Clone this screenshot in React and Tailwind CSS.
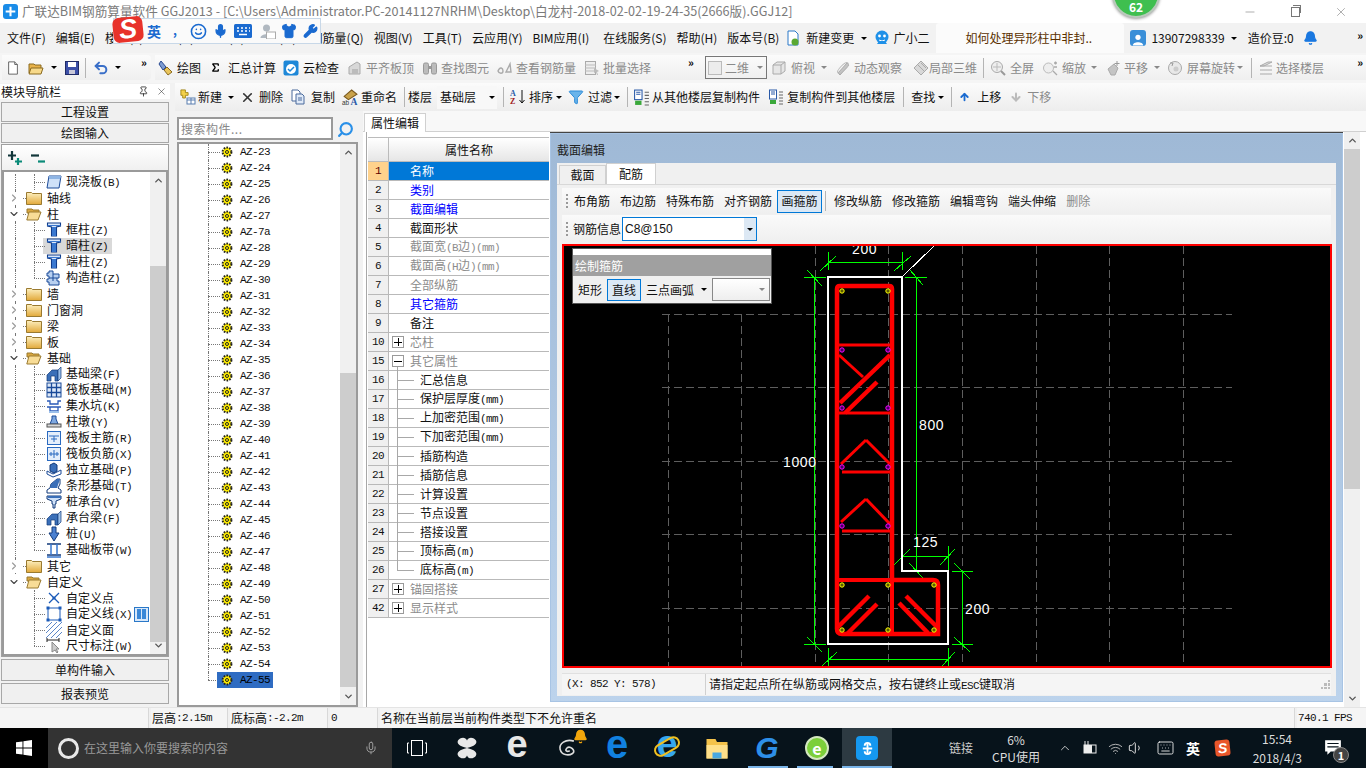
import React from 'react';
import { ChevronRight, ChevronDown, ChevronUp, Search, Pin, X, Minus, Smile, Mic, Shirt, Wrench, Wifi, Volume1, Keyboard, Bell, ArrowUp, ArrowDown, Sigma, Filter, Undo2 } from 'lucide-react';

const Sim = ({ children }) => {
  const parts = String(children).split(/([\x00-\x7F]+)/).filter(Boolean);
  return <>{parts.map((p, i) => /^[\x00-\x7F]+$/.test(p)
    ? <span key={i} className="font-['Liberation_Mono',monospace] text-[11px] tracking-[-0.6px] whitespace-pre">{p}</span>
    : <span key={i}>{p}</span>)}</>;
};

const Tx = ({ c = '', g, children }) => <span className={`whitespace-nowrap leading-none ${g ? 'text-[#8a8a8a]' : 'text-[#111]'} ${c}`}>{children}</span>;
const Caret = ({ c = '', g }) => <span className={`w-0 h-0 shrink-0 border-x-[3px] border-t-[3px] border-x-transparent ${g ? 'border-t-[#888]' : 'border-t-black'} ${c}`} />;
const Sep = ({ c = '' }) => <span className={`w-px h-[20px] bg-[#b4b4b4] shrink-0 ${c}`} />;
const More = ({ c = '' }) => <span className={`text-[11px] font-bold leading-none text-black shrink-0 ${c}`}>»</span>;
const Sv = ({ c = 'w-4 h-4', children, vb = '0 0 16 16' }) => <svg viewBox={vb} className={`shrink-0 ${c}`}>{children}</svg>;

const IDoc = ({ c }) => <Sv c={c}><path d="M3 1h7l3 3v11H3z" fill="#fff" stroke="#555" /><path d="M10 1v3h3" fill="#ddd" stroke="#555" /></Sv>;
const IFolderTool = ({ c }) => <Sv c={c}><path d="M1 4h5l1 1h6v8H1z" fill="#e8b24a" stroke="#8a6a20" /><path d="M3 8h12l-2 6H1z" fill="#f7d98a" stroke="#8a6a20" /></Sv>;
const ISave = ({ c }) => <Sv c={c}><rect x="1.5" y="1.5" width="13" height="13" fill="#3c4fa8" stroke="#1f2a66" /><rect x="4" y="2" width="8" height="5" fill="#fff" /><rect x="5" y="10" width="6" height="4" fill="#c8c8d8" /></Sv>;
const IBrush = ({ c }) => <Sv c={c}><path d="M3 1l5 6-3 3-4-6z" fill="#7d9bd0" stroke="#2a4a90" /><path d="M6 10l3-3 5 5-4 3z" fill="#e9c45a" stroke="#8a6a20" /></Sv>;
const ICloud = ({ c }) => <Sv c={c}><rect x="0.5" y="0.5" width="15" height="15" rx="2" fill="#1e88d8" /><circle cx="8" cy="9" r="5" fill="#fff" /><path d="M5 9l2 2 4-4" stroke="#1e88d8" strokeWidth="1.5" fill="none" /></Sv>;
const IGrayA = ({ c }) => <Sv c={c}><path d="M2 14V7l8-5 3 2v10z" fill="#d8d8d8" stroke="#aaa" /><path d="M5 9h6v5H5z" fill="#bbb" /></Sv>;
const IBino = ({ c }) => <Sv c={c}><rect x="1.5" y="3" width="5" height="11" rx="1.5" fill="#bcbcbc" stroke="#999" /><rect x="9.5" y="3" width="5" height="11" rx="1.5" fill="#bcbcbc" stroke="#999" /><rect x="6" y="6" width="4" height="3" fill="#999" /></Sv>;
const IRing = ({ c }) => <Sv c={c}><path d="M1 11c2-5 5-3 5 0s-4 3-5 0z" fill="none" stroke="#aaa" strokeWidth="1.4" /><path d="M9 12l4-8 1 8z" fill="none" stroke="#aaa" strokeWidth="1.4" /></Sv>;
const IBatch = ({ c }) => <Sv c={c}><rect x="1.5" y="1.5" width="10" height="13" fill="#eee" stroke="#aaa" /><path d="M1 5h11M1 8h11M1 11h11" stroke="#bbb" /><path d="M10 8l5 3-2 1 1 3-1 0-1-3-2 1z" fill="#bbb" /></Sv>;
const ICube = ({ c }) => <Sv c={c}><path d="M2 5l4-3h8v9l-4 3H2z" fill="#e6e6e6" stroke="#aaa" /><path d="M2 5h8v9M10 5l4-3" fill="none" stroke="#aaa" /></Sv>;
const IOrbit = ({ c }) => <Sv c={c}><path d="M3 13L12 3l2 2-9 10z" fill="#c4c4c4" stroke="#aaa" /><ellipse cx="8" cy="8" rx="7" ry="2.5" fill="none" stroke="#bbb" transform="rotate(-45 8 8)" /></Sv>;
const ILocal = ({ c }) => <Sv c={c}><path d="M8 1l7 7-7 7-7-7z" fill="#d8d8d8" stroke="#aaa" /><path d="M5 5l6 6M8 3l5 5" stroke="#aaa" /></Sv>;
const IZoom = ({ c }) => <Sv c={c}><circle cx="7" cy="7" r="5.5" fill="#eee" stroke="#aaa" /><path d="M7 3v8M3 7h8" stroke="#bbb" /><path d="M11 11l4 4" stroke="#999" strokeWidth="2" /></Sv>;
const IZoom2 = ({ c }) => <Sv c={c}><circle cx="6.5" cy="8" r="5" fill="#eee" stroke="#bbb" /><path d="M11 11l4 4M12 3h3M13.5 1.5v3M12 7h3" stroke="#aaa" strokeWidth="1.3" /></Sv>;
const IPan = ({ c }) => <Sv c={c}><path d="M3 9l6-5 4 4-3 7H6z" fill="#c4c4c4" stroke="#aaa" /><path d="M12 1v5M9.5 3.5h5" stroke="#999" /></Sv>;
const IRot = ({ c }) => <Sv c={c}><circle cx="8" cy="8" r="6.5" fill="#e8e8e8" stroke="#aaa" /><circle cx="9" cy="9" r="2.5" fill="#ccc" /><path d="M3 3l3 0-1 3" fill="none" stroke="#999" /></Sv>;
const IFloors = ({ c }) => <Sv c={c}><path d="M2 6l8-4 4 0-8 4zM2 10h12M2 14h12M2 6h12" stroke="#aaa" fill="#ddd" /></Sv>;
const INew = ({ c }) => <Sv c={c}><path d="M1 1h5v3h3v3H6v3H3V7H1z" transform="scale(.9)" fill="#f3d14a" stroke="#a08416" /><rect x="7" y="9" width="8" height="6" fill="#fff" stroke="#5a7fb0" /><path d="M7 11h8M11 9v6" stroke="#5a7fb0" /></Sv>;
const ICopy = ({ c }) => <Sv c={c}><path d="M2 1h6l2 2v9H2z" fill="#fff" stroke="#4a6a9c" /><path d="M6 5h6l2 2v8H6z" fill="#dfe9f7" stroke="#4a6a9c" /><path d="M8 9h4M8 11h4" stroke="#4a6a9c" /></Sv>;
const IRename = ({ c }) => <Sv c={c}><path d="M3 7l7-6 5 4-8 5z" fill="#c9a24a" stroke="#7a5a20" /><text x="9" y="15.5" fontSize="9" fontWeight="700" fill="#2a5aa8" fontFamily="Liberation Serif">A</text><text x="1" y="15" fontSize="6" fill="#333" fontFamily="Liberation Sans">ab</text></Sv>;
const ISort = ({ c }) => <Sv c={c} vb="0 0 20 16"><text x="1" y="7" fontSize="8" fontWeight="700" fill="#2a5aa8" fontFamily="Liberation Serif">A</text><text x="1" y="15" fontSize="8" fontWeight="700" fill="#a02020" fontFamily="Liberation Serif">Z</text><path d="M13 1v13M10.5 11l2.5 3 2.5-3" stroke="#111" fill="none" /></Sv>;
const ICopyFloor = ({ c }) => <Sv c={c}><rect x="1.5" y="1" width="7" height="9" fill="#fff" stroke="#2a5aa8" /><path d="M3 3h4M3 5h4" stroke="#2a5aa8" /><rect x="2" y="11" width="6" height="4" fill="#3aa83a" /><path d="M11 3h4M11 6h4M11 9h4M11 12h4M11 15h4" stroke="#666" /></Sv>;

const IBeam = () => <Sv><path d="M1 15V9l5-5h6v11h-3v-5H5v5z" fill="#3a6fb8" stroke="#123a7a" strokeWidth=".7" /><path d="M12 4l3-3v11l-3 3z" fill="#9cc0ea" stroke="#123a7a" strokeWidth=".7" /></Sv>;
const IT = () => <Sv><path d="M1.5 1h13v3l-4 1v9h-5V5l-4-1z" fill="#dbe8fa" stroke="#113c8a" strokeWidth="1.1" /><path d="M6 5h4v9H6z" fill="#3a78d0" /><path d="M1.5 3.5h13" stroke="#3a78d0" /></Sv>;
const IBrick = () => <Sv><path d="M3 1h4v3h6v4h-2v3h2v4H3v-3H1V9h2V6H1V3h2z" fill="#b8d0f0" stroke="#1a4a98" /><path d="M7 4v7M3 8h8" stroke="#1a4a98" /></Sv>;
const ISlab = () => <Sv><path d="M3 2h12l-2 12H1z" fill="#cfe1f8" stroke="#1a4a98" /><path d="M3 2h12l-1 3H3z" fill="#8fb5e4" /></Sv>;
const IGrid = () => <Sv><rect x="1" y="1" width="14" height="14" fill="#dce8f8" stroke="#1a4a98" /><path d="M5.5 1v14M10.5 1v14M1 5.5h14M1 10.5h14" stroke="#1a4a98" strokeWidth="1.3" /></Sv>;
const IPit = () => <Sv><path d="M1 3h3v3h8V3h3M1 9h14M4 9v4h8V9" fill="none" stroke="#2a5ab8" strokeWidth="1.3" /><path d="M3 14h10" stroke="#9cc0ea" strokeWidth="2" /></Sv>;
const IPier = () => <Sv><path d="M6 2h4v3l2 5H4l2-5z" fill="#7ea8e0" stroke="#1a4a98" /><rect x="1" y="10" width="14" height="3" fill="#d8d8d8" stroke="#555" /></Sv>;
const IRebar = ({ m }) => <Sv><rect x="1.5" y="1.5" width="13" height="13" fill="#e4eefb" stroke="#2a6ac0" /><path d={m ? 'M3 8h10M8 4v8M5 6v4M11 6v4' : 'M3 6h10M8 6v6M5 9h6'} stroke="#2a6ac0" fill="none" /></Sv>;
const IInde = () => <Sv><path d="M1 9l6 3 8-4v4l-8 3-6-3z" fill="#fff" stroke="#1a4a98" /><path d="M4 3l4-2 3 2v6l-3 2-4-2z" fill="#3a6fb8" stroke="#123a7a" /></Sv>;
const IStrip = () => <Sv><path d="M1 15v-3l3-2 1-4 6-5h3v5l-2 4 3 2v3z" fill="#fff" stroke="#123a7a" /><path d="M5 6l6-5h3l-3 9H4z" fill="#3a6fb8" /></Sv>;
const ICap = () => <Sv><path d="M1 2h14v3l-5 2v3h-1v4H7v-4H6V7L1 5z" fill="#cfe1f8" stroke="#123a7a" /><path d="M2 2h13v2H2z" fill="#3a6fb8" /></Sv>;
const IPile = () => <Sv><path d="M6 1h4v6h3l-5 8-5-8h3z" fill="#4a80d0" stroke="#123a7a" /></Sv>;
const IBand = () => <Sv><path d="M1 2h14M1 13h14" stroke="#123a7a" strokeWidth="1.5" /><path d="M5 2v11M11 2v11M1 15h14" stroke="#3a78d0" strokeWidth="1.5" /></Sv>;
const IPoint = () => <Sv><path d="M3 3l10 10M13 3L3 13" stroke="#1a5ab8" strokeWidth="1.3" /><circle cx="8" cy="8" r="1.6" fill="#1a5ab8" /></Sv>;
const ILine = () => <Sv><rect x="2" y="2" width="12" height="12" fill="none" stroke="#1a5ab8" /><g fill="#1a5ab8"><rect x="0.5" y="0.5" width="3" height="3" /><rect x="12.5" y="0.5" width="3" height="3" /><rect x="0.5" y="12.5" width="3" height="3" /><rect x="12.5" y="12.5" width="3" height="3" /></g></Sv>;
const IArea = () => <Sv><path d="M0 6l6-6M0 11L11 0M0 16L16 0M5 16L16 5M10 16l6-6" stroke="#5a86c8" /></Sv>;
const IDim = () => <Sv><path d="M1 0v4M13 0v4M1 2h12" stroke="#222" /><path d="M6 4v10l3-2 2 3 1-1-2-3h3z" fill="#ccc" stroke="#888" /></Sv>;
const IFolder = ({ open }) => open
  ? <Sv c="w-[16px] h-[14px]" vb="0 0 16 14"><path d="M1 2h5l1 1h6v3H1z" fill="#d9a740" stroke="#9a7a30" /><path d="M3 5h12l-3 8H.8z" fill="#f8dc96" stroke="#9a7a30" /></Sv>
  : <Sv c="w-[16px] h-[14px]" vb="0 0 16 14"><path d="M.5 1.5h5l1 1h9v11H.5z" fill="url(#fg)" stroke="#9a7a30" /><defs><linearGradient id="fg" x1="0" y1="0" x2="0" y2="1"><stop offset="0" stopColor="#fdf0c0" /><stop offset="1" stopColor="#e2a93a" /></linearGradient></defs></Sv>;
const IGear = () => <Sv c="w-[12px] h-[12px]" vb="0 0 12 12"><circle cx="6" cy="6" r="4.4" fill="#ffee00" stroke="#222" strokeWidth="2" strokeDasharray="1.6 1.2" /><circle cx="6" cy="6" r="1.5" fill="#ffee00" stroke="#222" /></Sv>;
const IExpand = ({ c }) => <Sv c={c}><path d="M5 1v9M1 5.5h8" stroke="#12363a" strokeWidth="2.2" /><path d="M11 8v7M8 11.5h7" stroke="#0a8a78" strokeWidth="2.2" /></Sv>;
const ICollapse = ({ c }) => <Sv c={c}><path d="M1 5.5h8" stroke="#12363a" strokeWidth="2.2" /><path d="M8 11.5h7" stroke="#0a8a78" strokeWidth="2.2" /></Sv>;

const ROWS = [
  { n: '现浇板(B)', i: <ISlab />, k: 1 },
  { n: '轴线', f: 0 }, { n: '柱', f: 1 },
  { n: '框柱(Z)', i: <IT />, k: 1 }, { n: '暗柱(Z)', i: <IT />, k: 1, sel: 1 }, { n: '端柱(Z)', i: <IT />, k: 1 }, { n: '构造柱(Z)', i: <IBrick />, k: 2 },
  { n: '墙', f: 0 }, { n: '门窗洞', f: 0 }, { n: '梁', f: 0 }, { n: '板', f: 0 }, { n: '基础', f: 1 },
  { n: '基础梁(F)', i: <IBeam />, k: 1 }, { n: '筏板基础(M)', i: <IGrid />, k: 1 }, { n: '集水坑(K)', i: <IPit />, k: 1 }, { n: '柱墩(Y)', i: <IPier />, k: 1 },
  { n: '筏板主筋(R)', i: <IRebar />, k: 1 }, { n: '筏板负筋(X)', i: <IRebar m />, k: 1 }, { n: '独立基础(P)', i: <IInde />, k: 1 }, { n: '条形基础(T)', i: <IStrip />, k: 1 },
  { n: '桩承台(V)', i: <ICap />, k: 1 }, { n: '承台梁(F)', i: <IBeam />, k: 1 }, { n: '桩(U)', i: <IPile />, k: 1 }, { n: '基础板带(W)', i: <IBand />, k: 2 },
  { n: '其它', f: 0 }, { n: '自定义', f: 1, end: 1 },
  { n: '自定义点', i: <IPoint />, k: 1, nr: 1 }, { n: '自定义线(X)', i: <ILine />, k: 1, nr: 1, extra: 1 }, { n: '自定义面', i: <IArea />, k: 1, nr: 1 }, { n: '尺寸标注(W)', i: <IDim />, k: 2, nr: 1 },
];

const DotV = ({ c }) => <span className={`absolute w-0 border-l border-dotted border-[#777] ${c}`} />;
const DotH = ({ c }) => <span className={`absolute h-0 border-t border-dotted border-[#777] top-1/2 ${c}`} />;

const TreeRow = ({ r }) => (
  <div className="relative h-[16px] flex items-center text-[12px] text-[#111] whitespace-nowrap">
    {r.sel && <span className="absolute left-[39px] top-0 w-[69px] h-full bg-[#d9d9d9]" />}
    {!r.end && !r.nr && <DotV c="left-[11px] top-0 bottom-0" />}
    {r.k === 1 && <DotV c="left-[30px] top-0 bottom-0" />}
    {r.k === 2 && <DotV c="left-[30px] top-0 h-1/2" />}
    {r.k && <DotH c="left-[30px] w-[11px]" />}
    {r.f !== undefined && <DotH c="left-[19px] w-[3px]" />}
    {r.f !== undefined ? (
      <>
        <span className="absolute left-[4px] bg-white">
          {r.f ? <ChevronDown className="w-[12px] h-[12px] text-[#444]" strokeWidth={2.2} /> : <ChevronRight className="w-[12px] h-[12px] text-[#999]" strokeWidth={2.2} />}
        </span>
        <span className="ml-[22px] flex"><IFolder open={r.f} /></span>
        <span className="ml-[5px]">{r.n}</span>
      </>
    ) : (
      <>
        <span className="ml-[42px] flex relative">{r.i}</span>
        <span className="relative ml-[2px] pl-[2px] pr-[2px] leading-[16px]"><Sim>{r.n}</Sim></span>
        {r.extra && <span className="flex items-center"><span className="w-[15px] h-[15px] bg-[#d8e8fa] border border-[#2a78c8] flex justify-center items-center gap-[1px]"><span className="w-[4px] h-[10px] bg-[#3a88d8]" /><span className="w-[4px] h-[10px] bg-[#3a88d8]" /></span><span className="w-[2px] h-[8px] bg-black ml-[1px] border-r border-[#f3d14a]" /></span>}
      </>
    )}
  </div>
);

const AZ = ['AZ-23', 'AZ-24', 'AZ-25', 'AZ-26', 'AZ-27', 'AZ-7a', ...Array.from({ length: 28 }, (_, i) => `AZ-${28 + i}`)];

const GRID = [
  ['1', '名称', 'sel'], ['2', '类别', 'b'], ['3', '截面编辑', 'b'], ['4', '截面形状', 'k'], ['5', '截面宽(B边)(mm)', 'g'], ['6', '截面高(H边)(mm)', 'g'], ['7', '全部纵筋', 'g'], ['8', '其它箍筋', 'b'], ['9', '备注', 'k'],
  ['10', '芯柱', 'g', '+'], ['15', '其它属性', 'g', '-'],
  ['16', '汇总信息', 'k', 'c'], ['17', '保护层厚度(mm)', 'k', 'c'], ['18', '上加密范围(mm)', 'k', 'c'], ['19', '下加密范围(mm)', 'k', 'c'], ['20', '插筋构造', 'k', 'c'], ['21', '插筋信息', 'k', 'c'], ['22', '计算设置', 'k', 'c'], ['23', '节点设置', 'k', 'c'], ['24', '搭接设置', 'k', 'c'], ['25', '顶标高(m)', 'k', 'c'], ['26', '底标高(m)', 'k', 'e'],
  ['27', '锚固搭接', 'g', '+'], ['42', '显示样式', 'g', '+'],
];

const Box = ({ t }) => <span className="absolute left-[3px] top-[3px] w-[12px] h-[12px] border border-[#9a9a9a] bg-white flex items-center justify-center text-[#111]">
  <span className="absolute w-[8px] h-px bg-black" />{t === '+' && <span className="absolute w-px h-[8px] bg-black" />}
</span>;

const GridRow = ({ r }) => {
  const [no, name, kind, tr] = r;
  const col = kind === 'sel' ? 'bg-[#0078d7] text-white' : kind === 'b' ? 'text-[#0000ff]' : kind === 'g' ? 'text-[#8c8c8c]' : 'text-[#111]';
  return (
    <div className="flex h-[19px] text-[12px]">
      <div className={`w-[21px] shrink-0 flex items-center justify-center border-r border-b border-[#b9b9b9] font-['Liberation_Mono',monospace] text-[11px] tracking-[-0.6px] ${kind === 'sel' ? 'bg-[#ffd28c] text-[#5a0000]' : 'bg-[#f0f0f0] text-[#111]'}`}>{no}</div>
      <div className="relative flex-1 border-b border-[#b9b9b9] bg-white min-w-0">
        <div className={`relative h-full flex items-center ${col}`}>
          {tr === '+' || tr === '-' ? <Box t={tr} /> : null}
          {(tr === 'c' || tr === 'e') && <span className={`absolute left-[8px] top-0 w-px bg-[#a8a8a8] ${tr === 'e' ? 'h-1/2' : 'h-[20px]'}`} />}
          {(tr === 'c' || tr === 'e') && <span className="absolute left-[8px] top-1/2 w-[17px] h-px bg-[#a8a8a8]" />}
          {no === '15' && <span className="absolute left-[8px] top-[15px] w-px h-[5px] bg-[#a8a8a8]" />}
          <span className={`whitespace-nowrap ${tr === 'c' || tr === 'e' ? 'ml-[31px]' : 'ml-[21px]'}`}><Sim>{name}</Sim></span>
        </div>
      </div>
    </div>
  );
};

const ScrollBar = ({ c }) => (
  <div className={`bg-[#f0f0f0] flex flex-col items-center justify-between shrink-0 ${c}`}>
    <div className="h-[17px] flex items-center"><ChevronUp className="w-[11px] h-[11px] text-[#555]" strokeWidth={3} /></div>
    <div className="h-[17px] flex items-center"><ChevronDown className="w-[11px] h-[11px] text-[#555]" strokeWidth={3} /></div>
  </div>
);

const NavBtn = ({ c = 'h-[20px]', children }) => <div className={`mx-[1px] bg-[#f0f0f0] border border-[#a8a8a8] flex items-center justify-center text-[12px] text-[#111] ${c}`}>{children}</div>;

const Drawing = () => {
  const G = '#00ff00', R = '#ff0000';
  const gridH = [314, 387, 461, 534, 608];
  const yDots = [[842, 291], [888, 291], [842, 585], [888, 585], [934, 585], [842, 630], [888, 630], [934, 630]];
  const mDots = [[842, 350], [888, 350], [842, 408], [888, 408], [842, 467], [888, 467], [842, 526], [888, 526]];
  const greens = [
    [814, 277, 814, 644], [804, 277, 826, 277], [807, 270, 822, 286], [804, 644, 826, 644], [807, 637, 822, 652],
    [916, 277, 916, 571], [905, 277, 927, 277], [910, 270, 923, 285], [902, 571, 927, 571], [909, 563, 923, 578],
    [828, 262, 902, 262], [828, 252, 828, 270], [902, 252, 902, 270], [820, 271, 836, 256], [894, 271, 911, 256],
    [902, 556, 948, 556], [902, 546, 902, 570], [948, 546, 948, 570], [894, 565, 910, 549], [940, 565, 955, 549],
    [962, 571, 962, 644], [952, 571, 973, 571], [952, 644, 973, 644], [954, 563, 970, 579], [954, 637, 970, 652],
    [828, 659, 948, 659], [828, 648, 828, 666], [948, 648, 948, 666], [822, 666, 837, 652], [942, 666, 955, 652],
  ];
  const thin = [[837, 345, 892, 345], [837, 413, 892, 413], [842, 472, 892, 472], [842, 531, 892, 531], [839, 355, 863, 377], [866, 440, 841, 464], [866, 440, 890, 464], [866, 499, 841, 522], [866, 499, 890, 524]];
  const thick = [[890, 355, 840, 403], [877, 382, 845, 413], [869, 596, 838, 627], [877, 604, 847, 634], [906, 596, 937, 627], [899, 603, 928, 633]];
  const Lbl = ({ x, y, t }) => <text x={x} y={y} fill="#fff" fontSize="14" fontFamily="Liberation Sans, sans-serif" letterSpacing="0.6">{t}</text>;
  return (
    <svg viewBox="564 246 766 420" className="block w-[766px] h-[420px]" shapeRendering="crispEdges">
      <g stroke="#5e5e5e" strokeDasharray="8 4" fill="none">
        <line x1="668" y1="314" x2="668" y2="666" />
        <line x1="741" y1="314" x2="741" y2="666" />
        {[815, 888, 962, 1036, 1109, 1183].map(x => <line key={x} x1={x} y1="246" x2={x} y2="666" />)}
        {gridH.map(y => <line key={y} x1="662" y1={y} x2="1232" y2={y} />)}
      </g>
      <g stroke={G}>
        {greens.map((l, i) => <line key={i} x1={l[0]} y1={l[1]} x2={l[2]} y2={l[3]} />)}
      </g>
      <line x1="903" y1="276" x2="934" y2="246" stroke="#fff" />
      <path d="M828 277H902V571H948V644H828Z" fill="none" stroke="#fff" strokeWidth="2" />
      <path d="M840 286H889Q892 286 892 289V580H933Q938 580 938 585V634H842Q837 634 837 629V289Q837 286 840 286Z" fill="none" stroke={R} strokeWidth="4.5" shapeRendering="auto" />
      <path d="M837 580H892V634" fill="none" stroke={R} strokeWidth="4" />
      <g stroke={R} strokeWidth="3" shapeRendering="auto">{thin.map((l, i) => <line key={i} x1={l[0]} y1={l[1]} x2={l[2]} y2={l[3]} />)}</g>
      <g stroke={R} strokeWidth="4.5" shapeRendering="auto">{thick.map((l, i) => <line key={i} x1={l[0]} y1={l[1]} x2={l[2]} y2={l[3]} />)}</g>
      <g fill="#5a5a00" stroke="#ffff00" shapeRendering="auto">{yDots.map((d, i) => <circle key={i} cx={d[0]} cy={d[1]} r="2.2" />)}</g>
      <g fill="#400060" stroke="#ff00ff" shapeRendering="auto">{mDots.map((d, i) => <circle key={i} cx={d[0]} cy={d[1]} r="2.2" />)}</g>
      <g shapeRendering="auto">
        <Lbl x="852" y="254" t="200" />
        <Lbl x="919" y="430" t="800" />
        <Lbl x="783" y="467" t="1000" />
        <Lbl x="913" y="547" t="125" />
        <Lbl x="965" y="614" t="200" />
      </g>
    </svg>
  );
};

const Dialog = () => (
  <div className="absolute left-[550px] top-[132px] w-[793px] h-[570px] border-t border-[#444] bg-gradient-to-b from-[#9fb9d6] to-[#bcd3ec] flex flex-col px-[7px] pb-[6px] shadow-[inset_0_0_0_1px_#a8c4e4]">
    <div className="h-[30px] shrink-0 flex items-center pt-[3px] text-[12px] text-[#222]">截面编辑</div>
    <div className="flex-1 bg-[#f0f0f0] flex flex-col min-h-0">
      <div className="h-[21px] shrink-0 flex items-end pl-[2px] text-[12px] text-[#111]">
        <div className="w-[47px] h-[19px] bg-[#f0f0f0] border border-b-0 border-[#d0d0d0] flex items-center justify-center">截面</div>
        <div className="w-[50px] h-[21px] bg-white border border-b-0 border-[#d0d0d0] flex items-center justify-center">配筋</div>
      </div>
      <div className="flex-1 flex flex-col min-h-0 px-[5px] border-t border-[#d8d8d8] text-[12px]">
        <div className="h-[26px] mt-[3px] shrink-0 flex items-center bg-gradient-to-b from-[#fafafa] to-[#efefef]">
          <span className="ml-[4px] w-[2px] h-[14px] border-l-2 border-dotted border-[#999]" />
          <Tx c="ml-[6px]">布角筋</Tx><Tx c="ml-[10px]">布边筋</Tx><Tx c="ml-[10px]">特殊布筋</Tx><Tx c="ml-[10px]">对齐钢筋</Tx>
          <span className="ml-[5px] w-[45px] h-[23px] border border-[#0078d7] bg-[#dbe8f5] flex items-center justify-center text-[#111]">画箍筋</span>
          <Sep c="ml-[3px]" />
          <Tx c="ml-[8px]">修改纵筋</Tx><Tx c="ml-[10px]">修改箍筋</Tx><Tx c="ml-[10px]">编辑弯钩</Tx><Tx c="ml-[10px]">端头伸缩</Tx><Tx g c="ml-[10px]">删除</Tx>
        </div>
        <div className="h-[28px] mt-px shrink-0 flex items-center bg-gradient-to-b from-[#fafafa] to-[#efefef]">
          <span className="ml-[4px] w-[2px] h-[14px] border-l-2 border-dotted border-[#999]" />
          <Tx c="ml-[5px]">钢筋信息</Tx>
          <div className="ml-px w-[135px] h-[24px] border border-[#0078d7] bg-white flex items-center">
            <span className="ml-[2px] font-['Liberation_Sans',sans-serif] text-[12px] text-[#111] flex-1">C8@150</span>
            <span className="w-[12px] h-full bg-[#dce8f4] flex items-center justify-center"><Caret /></span>
          </div>
        </div>
        <div className="relative mt-px w-[770px] h-[424px] shrink-0 border-2 border-[#ff0000] bg-black overflow-hidden">
          <Drawing />
          <div className="absolute left-[8px] top-[2px] w-[200px] h-[56px] bg-white border border-[#555] flex flex-col text-[12px]">
            <div className="h-[6px] shrink-0" />
            <div className="h-[21px] shrink-0 bg-[#a0a0a0] text-white flex items-center pl-[2px]">绘制箍筋</div>
            <div className="flex-1 bg-[#f0f0f0] flex items-center">
              <Tx c="ml-[5px]">矩形</Tx>
              <span className="ml-[5px] w-[34px] h-[22px] border border-[#0078d7] bg-[#dbe8f5] flex items-center justify-center">直线</span>
              <Tx c="ml-[5px]">三点画弧</Tx>
              <Caret c="ml-[7px]" />
              <span className="ml-[5px] w-[58px] h-[23px] border border-[#888] bg-gradient-to-b from-white to-[#eee] flex items-center justify-end pr-[4px]"><Caret g /></span>
            </div>
          </div>
        </div>
        <div className="h-[22px] mt-[5px] shrink-0 flex items-center bg-[#f5f5f5] border-t border-[#e0e0e0] text-[#111]">
          <span className="w-[144px] pl-[4px] border-r border-[#d0d0d0] h-full flex items-center"><Sim>(X: 852 Y: 578)</Sim></span>
          <span className="ml-[3px] flex-1"><Sim>请指定起点所在纵筋或网格交点，按右键终止或ESC键取消</Sim></span>
          <span className="mr-[1px] w-[9px] h-[9px] grid grid-cols-3 gap-px">{[0, 1, 2, 3, 4, 5, 6, 7, 8].map(i => <span key={i} className={[0, 1, 3].includes(i) ? '' : 'bg-[#bbb]'} />)}</span>
        </div>
      </div>
    </div>
  </div>
);

const Ime = () => (
  <div className="absolute left-[113px] top-[18px] w-[208px] h-[26px] bg-[#fafafa] border border-[#c8d8e8] flex items-center text-[#1a6ad0]">
    <span className="-ml-px -mt-[3px] w-[30px] h-[25px] rounded-[6px] bg-[#e8322a] -rotate-6 flex items-center justify-center text-white font-['Liberation_Sans',sans-serif] font-bold italic text-[27px] leading-none">S</span>
    <span className="ml-[4px] text-[14px] font-bold leading-none">英</span>
    <span className="ml-[12px] text-[12px] font-bold leading-none -mt-[2px]">,</span>
    <Smile className="ml-[13px] w-[17px] h-[17px]" strokeWidth={2.2} />
    <Mic className="ml-[6px] w-[15px] h-[16px] fill-[#1a6ad0]" strokeWidth={2.2} />
    <span className="ml-[6px] flex"><Sv c="w-[18px] h-[14px]" vb="0 0 18 14"><rect width="18" height="14" rx="1.5" fill="#1a6ad0" /><path d="M3 4h2M7 4h2M11 4h2M15 4h1M3 7h2M7 7h2M11 7h2M15 7h1M5 10.5h8" stroke="#fff" strokeWidth="1.5" /></Sv></span>
    <span className="ml-[7px] flex"><Sv c="w-[17px] h-[16px]"><circle cx="7" cy="5" r="3.5" fill="#b0b8c0" /><path d="M1 15c0-5 12-5 12 0z" fill="#b0b8c0" /><rect x="7" y="9" width="9" height="7" fill="#fff" stroke="#aaa" /></Sv></span>
    <Shirt className="ml-[5px] w-[16px] h-[16px] fill-[#1a6ad0]" strokeWidth={1.5} />
    <Wrench className="ml-[6px] w-[15px] h-[16px] fill-[#1a6ad0]" strokeWidth={2.2} />
  </div>
);

const Slot = ({ c = '', children }) => <div className={`w-[50px] h-full shrink-0 flex items-center justify-center relative ${c}`}>{children}</div>;

const Taskbar = () => (
  <div className="h-[40px] shrink-0 bg-[#07131b] flex items-center relative text-[12px]">
    <div className="w-[48px] h-full bg-black flex items-center justify-center">
      <Sv c="w-[16px] h-[16px]"><path d="M0 2.3l6.5-.9v6.2H0zM7.4 1.3L16 0v7.6H7.4zM0 8.4h6.5v6.2L0 13.7zM7.4 8.4H16V16l-8.6-1.2z" fill="#fff" /></Sv>
    </div>
    <div className="w-[344px] h-full bg-[#333] flex items-center">
      <span className="ml-[10px] w-[21px] h-[21px] rounded-full border-[3px] border-[#e8e8e8]" />
      <span className="ml-[5px] text-[#999] text-[12px] flex-1 whitespace-nowrap">在这里输入你要搜索的内容</span>
      <Mic className="mr-[14px] w-[14px] h-[18px] text-[#aaa]" strokeWidth={1.5} />
    </div>
    <Slot><Sv c="w-[20px] h-[16px]" vb="0 0 20 16"><rect x="4.5" y="0.5" width="11" height="15" fill="none" stroke="#fff" /><path d="M2 3H.5v10H2M18 3h1.5v10H18" fill="none" stroke="#fff" /></Sv></Slot>
    <Slot><Sv c="w-[24px] h-[26px]"><path d="M8 8C3 7 1 5 2 3s5-3 6 0zM8 8c5-1 7-3 6-5s-5-3-6 0zM8 8C3 9 1 11 2 13s5 3 6 0zM8 8c5 1 7 3 6 5s-5 3-6 0z" fill="#e8e8e8" /></Sv></Slot>
    <Slot><span className="font-['Liberation_Sans',sans-serif] text-[38px] leading-none font-bold -mt-[8px] text-[#e8e8e8]">e</span></Slot>
    <Slot><Sv c="w-[22px] h-[22px]"><path d="M13 3C7 1 2 5 3 9s6 5 9 3-2-6-4-4 0 3 2 2" fill="none" stroke="#ddd" strokeWidth="1.2" /></Sv><Bell className="absolute left-[31px] top-[1px] w-[15px] h-[15px] text-[#f2a60c] fill-[#f2a60c]" /></Slot>
    <Slot><span className="font-['Liberation_Sans',sans-serif] text-[40px] leading-none font-bold -mt-[8px] text-[#1181e0]">e</span></Slot>
    <Slot><span className="font-['Liberation_Sans',sans-serif] text-[38px] leading-none font-bold -mt-[8px] text-[#36a7ee]">e</span><span className="absolute left-[11px] top-[12px] w-[28px] h-[13px] rounded-full border-2 border-[#f0c020] -rotate-[30deg]" /></Slot>
    <Slot><Sv c="w-[24px] h-[24px]"><path d="M1 2h6l1 2h7v11H1z" fill="#f4c24a" /><path d="M1 6h14v9H1z" fill="#ffe08a" /><path d="M5 11h6v4H5z" fill="#4aa8e0" /></Sv></Slot>
    <Slot><span className="text-[30px] font-bold italic font-['Liberation_Sans',sans-serif] leading-none text-[#2d8fe8]">G</span></Slot>
    <Slot><span className="w-[24px] h-[24px] rounded-full bg-[#7ccf3a] border-2 border-[#d4e8c0] flex items-center justify-center text-white font-bold text-[16px] leading-none">e</span></Slot>
    <Slot c="bg-[#2d3a42]">
      <span className="w-[22px] h-[24px] rounded-[4px] bg-[#1598f0] flex items-center justify-center"><Sv c="w-[15px] h-[15px]"><path d="M8 2v11M3 8h10M5 5a3 3 0 0 1 6 0M11 11a3 3 0 0 1-6 0" fill="none" stroke="#fff" strokeWidth="2" /></Sv></span>
    </Slot>
    <span className="absolute left-[748px] bottom-0 w-[40px] h-[2px] bg-[#7ab4e8]" />
    <span className="absolute left-[797px] bottom-0 w-[36px] h-[2px] bg-[#7ab4e8]" />
    <span className="absolute left-[842px] bottom-0 w-[50px] h-[2px] bg-[#7ab4e8]" />
    <span className="ml-[57px] text-[#ccc] whitespace-nowrap">链接</span>
    <div className="ml-[19px] w-[48px] flex flex-col items-center text-[#ddd] leading-[17px]"><span>6%</span><span className="whitespace-nowrap">CPU使用</span></div>
    <ChevronUp className="ml-[18px] w-[14px] h-[14px] text-[#ddd]" strokeWidth={1.5} />
    <span className="ml-[9px] flex"><Sv c="w-[16px] h-[16px]"><rect x="3" y="5" width="12" height="8" fill="none" stroke="#eee" /><rect x="3" y="5" width="8" height="8" fill="#eee" /><path d="M4 1v4M7 1v4" stroke="#eee" /></Sv></span>
    <Wifi className="ml-[11px] w-[15px] h-[15px] text-[#bbb]" strokeWidth={1.5} />
    <Volume1 className="ml-[5px] w-[16px] h-[16px] text-[#ddd]" strokeWidth={1.5} />
    <Keyboard className="ml-[10px] w-[23px] h-[18px] text-[#eee]" strokeWidth={1.2} />
    <span className="ml-[9px] text-white font-bold text-[14px] leading-none">英</span>
    <span className="ml-[15px] w-[15px] h-[16px] rounded-[3px] bg-[#e8562a] -rotate-6 flex items-center justify-center text-white font-bold italic font-['Liberation_Sans',sans-serif] text-[14px] leading-none">S</span>
    <div className="ml-[20px] w-[52px] flex flex-col items-end text-[#ddd] leading-[19px]"><span className="pr-[10px]">15:54</span><span className="whitespace-nowrap">2018/4/3</span></div>
    <div className="ml-[22px] relative"><Sv c="w-[18px] h-[18px]"><path d="M1 1h14v10H6l-3 3v-3H1z" fill="#fff" /><path d="M3 4h10M3 7h10" stroke="#07131b" /></Sv><span className="absolute left-[9px] top-[8px] w-[16px] h-[16px] rounded-full bg-[#444] border border-[#888] text-white font-bold text-[11px] flex items-center justify-center leading-none">1</span></div>
  </div>
);

export default function App() {
  return (
    <div className="relative w-[1366px] h-[768px] overflow-hidden flex flex-col bg-[#f2f2f2] font-['Noto_Sans_CJK_SC',sans-serif] text-[12px] text-[#111]">
      {/* title bar */}
      <div className="h-[23px] shrink-0 bg-white flex items-center">
        <span className="ml-[3px] w-[15px] h-[15px] rounded-[3px] bg-[#1a8ce8] flex items-center justify-center"><Sv c="w-[11px] h-[11px]"><path d="M8 1v14M1 8h14" stroke="#fff" strokeWidth="3" /></Sv></span>
        <span className="ml-[4px] text-[#7a7a7a] text-[12.63px] whitespace-nowrap">广联达BIM钢筋算量软件 GGJ2013 - [C:\Users\Administrator.PC-20141127NRHM\Desktop\白龙村-2018-02-02-19-24-35(2666版).GGJ12]</span>
        <div className="ml-auto flex items-center text-[#777]">
          <Minus className="w-[14px] h-[14px]" strokeWidth={1} />
          <span className="ml-[34px] relative w-[9px] h-[10px] border border-[#777] bg-white after:content-[''] after:absolute after:-top-[3px] after:left-[1px] after:w-[8px] after:h-[8px] after:border-t after:border-r after:border-[#777]" />
          <X className="ml-[34px] mr-[18px] w-[14px] h-[14px]" strokeWidth={1} />
        </div>
      </div>
      {/* menu bar */}
      <div className="h-[30px] shrink-0 flex items-center bg-[#f2f2f2] text-[12px]">
        <Tx c="ml-[7px]">文件(F)</Tx><Tx c="ml-[10px]">编辑(E)</Tx><Tx c="ml-[10px]">楼层(L)</Tx><Tx c="ml-[10px]">构件(N)</Tx><Tx c="ml-[10px]">绘图(D)</Tx><Tx c="ml-[10px]">修改(M)</Tx><Tx c="ml-[14px]">钢筋量(Q)</Tx><Tx c="ml-[10px]">视图(V)</Tx><Tx c="ml-[10px]">工具(T)</Tx><Tx c="ml-[10px]">云应用(Y)</Tx><Tx c="ml-[10px]">BIM应用(I)</Tx><Tx c="ml-[14px]">在线服务(S)</Tx><Tx c="ml-[10px]">帮助(H)</Tx><Tx c="ml-[10px]">版本号(B)</Tx>
        <span className="ml-[6px] flex"><Sv><path d="M3 1h7l3 3v11H3z" fill="#fff" stroke="#2a78c8" /><circle cx="10" cy="12" r="3.5" fill="#5aa832" /></Sv></span>
        <Tx c="ml-[5px]">新建变更</Tx><Caret c="ml-[7px]" />
        <span className="ml-[7px] flex"><Sv><circle cx="8" cy="7" r="6.5" fill="#1e90e8" /><circle cx="5.5" cy="6" r="1.4" fill="#fff" /><circle cx="10.5" cy="6" r="1.4" fill="#fff" /><path d="M5 10q3 2 6 0" stroke="#fff" fill="none" /><path d="M3 14l2-3h6l2 3z" fill="#1e90e8" /></Sv></span>
        <Tx c="ml-[3px]">广小二</Tx>
        <div className="ml-[7px] w-[188px] h-full bg-[#fbfbfb] rounded-t-[3px] flex items-center pl-[29px] text-[#5a3000] whitespace-nowrap">如何处理异形柱中非封..</div>
        <span className="ml-[6px] w-[16px] h-[16px] rounded-[3px] bg-[#3a8fd8] flex items-end justify-center overflow-hidden"><Sv c="w-[12px] h-[13px]"><circle cx="8" cy="5" r="3.5" fill="#fff" /><path d="M1 16c0-6 14-6 14 0z" fill="#fff" /></Sv></span>
        <span className="ml-[5px] whitespace-nowrap text-[#111]">13907298339</span>
        <Caret c="ml-[6px]" />
        <Tx c="ml-[11px]">造价豆:0</Tx>
        <Bell className="ml-[9px] w-[15px] h-[18px] text-[#1a78e0] fill-[#1a78e0]" />
        <More c="ml-auto mr-[3px] -mt-[6px]" />
      </div>
      {/* toolbar 1 */}
      <div className="h-[30px] shrink-0 flex items-start pt-[2px] bg-[#f5f5f5]">
        <div className="ml-[2px] w-[149px] h-[25px] shrink-0 flex items-center bg-gradient-to-b from-[#fbfbfb] to-[#efefef] rounded-r-[4px]">
          <IDoc c="ml-[4px] w-[14px] h-[16px]" /><IFolderTool c="ml-[8px] w-4 h-4" /><Caret c="ml-[7px]" /><ISave c="ml-[7px] w-4 h-4" /><Sep c="ml-[5px]" /><Undo2 className="ml-[7px] w-[16px] h-[16px] text-[#3a6fc8]" strokeWidth={3} /><Caret c="ml-[6px]" /><More c="ml-[20px] -mt-[10px]" />
        </div>
        <div className="ml-[4px] w-[547px] h-[25px] shrink-0 flex items-center bg-gradient-to-b from-[#fbfbfb] to-[#efefef]">
          <IBrush c="ml-[3px] w-4 h-4" /><Tx c="ml-[3px]">绘图</Tx>
          <Sigma className="ml-[9px] w-[11px] h-[11px] text-black" strokeWidth={3} /><Tx c="ml-[7px]">汇总计算</Tx>
          <ICloud c="ml-[7px] w-4 h-4" /><Tx c="ml-[4px]">云检查</Tx>
          <IGrayA c="ml-[8px] w-4 h-4" /><Tx g c="ml-[3px]">平齐板顶</Tx>
          <IBino c="ml-[8px] w-4 h-4" /><Tx g c="ml-[3px]">查找图元</Tx>
          <IRing c="ml-[8px] w-4 h-4" /><Tx g c="ml-[3px]">查看钢筋量</Tx>
          <IBatch c="ml-[8px] w-4 h-4" /><Tx g c="ml-[3px]">批量选择</Tx>
          <More c="ml-[37px] -mt-[10px]" />
        </div>
        <div className="flex-1 h-[25px] flex items-center bg-gradient-to-b from-[#fbfbfb] to-[#efefef]">
          <div className="ml-[3px] w-[62px] h-[23px] border border-[#777] flex items-center text-[#8a8a8a]">
            <span className="ml-[2px] w-[14px] h-[14px] border border-[#bbb] bg-[#ececec]" /><span className="ml-[3px] flex-1">二维</span><Caret g c="mr-[3px]" />
          </div>
          <ICube c="ml-[4px] w-4 h-4" /><Tx g c="ml-[4px]">俯视</Tx><Caret g c="ml-[6px]" />
          <IOrbit c="ml-[8px] w-4 h-4" /><Tx g c="ml-[3px]">动态观察</Tx>
          <ILocal c="ml-[11px] w-4 h-4" /><Tx g>局部三维</Tx><Sep c="ml-[6px]" />
          <IZoom c="ml-[6px] w-4 h-4" /><Tx g c="ml-[4px]">全屏</Tx>
          <IZoom2 c="ml-[8px] w-4 h-4" /><Tx g c="ml-[4px]">缩放</Tx><Caret g c="ml-[5px]" />
          <IPan c="ml-[8px] w-4 h-4" /><Tx g c="ml-[3px]">平移</Tx><Caret g c="ml-[6px]" />
          <IRot c="ml-[7px] w-4 h-4" /><Tx g c="ml-[4px]">屏幕旋转</Tx><Caret g c="ml-[2px]" /><Sep c="ml-[8px]" />
          <IFloors c="ml-[6px] w-4 h-4" /><Tx g c="ml-[2px]">选择楼层</Tx>
          <More c="ml-auto mr-[3px] -mt-[10px]" />
        </div>
      </div>
      {/* main */}
      <div className="flex-1 flex min-h-0">
        {/* module nav */}
        <div className="w-[175px] shrink-0 pr-[5px] flex flex-col">
          <div className="h-[15px] shrink-0 flex items-center justify-between text-[12px] bg-white pl-px pr-[3px] mt-px">
            <span className="leading-none">模块导航栏</span>
            <span className="flex items-center gap-[7px]"><Pin className="w-[11px] h-[11px] text-black" strokeWidth={1.5} /><X className="w-[11px] h-[11px] text-[#333]" strokeWidth={1.2} /></span>
          </div>
          <div className="h-[3px] shrink-0" />
          <NavBtn>工程设置</NavBtn>
          <NavBtn c="h-[20px] mt-[1px]">绘图输入</NavBtn>
          <div className="flex-1 min-h-0 mt-[1px] mx-[1px] border border-[#a0a0a0] flex flex-col">
            <div className="h-[25px] shrink-0 flex items-center bg-gradient-to-b from-white to-[#f0f0f0] pl-[5px] gap-[7px]">
              <IExpand c="w-[16px] h-[16px]" />
              <ICollapse c="w-[16px] h-[16px]" />
            </div>
            <div className="flex-1 min-h-0 flex border-2 border-[#9a9a9a] bg-white">
              <div className="flex-1 min-w-0 pt-[2px] overflow-hidden">{ROWS.map((r, i) => <TreeRow key={i} r={r} />)}</div>
              <div className="relative flex">
                <ScrollBar c="w-[16px]" />
                <span className="absolute left-0 top-[94px] w-[16px] h-[376px] bg-[#cdcdcd]" />
              </div>
            </div>
          </div>
          <NavBtn c="mt-[2px] h-[22px]">单构件输入</NavBtn>
          <NavBtn c="mt-[2px] mb-[3px] h-[21px]">报表预览</NavBtn>
        </div>
        {/* right */}
        <div className="flex-1 min-w-0 flex flex-col">
          <div className="h-[28px] shrink-0 flex items-center bg-gradient-to-b from-[#fbfbfb] to-[#ededed]">
            <INew c="ml-[5px] w-4 h-4" /><Tx c="ml-[2px]">新建</Tx><Caret c="ml-[6px]" />
            <X className="ml-[6px] w-[15px] h-[15px] text-[#333]" strokeWidth={2.6} /><Tx c="ml-[4px]">删除</Tx>
            <ICopy c="ml-[7px] w-4 h-4" /><Tx c="ml-[5px]">复制</Tx>
            <IRename c="ml-[6px] w-[17px] h-[17px]" /><Tx c="ml-[3px]">重命名</Tx><Sep c="ml-[7px]" />
            <Tx c="ml-[3px]">楼层</Tx>
            <div className="ml-[5px] w-[60px] h-[23px] bg-[#f8f8f8] flex items-center pl-[3px]"><span className="flex-1">基础层</span><Caret c="mr-[2px]" /></div>
            <Sep c="ml-[6px]" />
            <ISort c="ml-[5px] w-[20px] h-[16px]" /><Tx>排序</Tx><Caret c="ml-[3px]" />
            <Filter className="ml-[6px] w-4 h-4 text-[#2a8ad8] fill-[#6ab4ea]" strokeWidth={1.5} /><Tx c="ml-[4px]">过滤</Tx><Caret c="ml-[2px]" /><Sep c="ml-[7px]" />
            <ICopyFloor c="ml-[5px] w-[17px] h-[17px]" /><Tx c="ml-[2px]">从其他楼层复制构件</Tx>
            <ICopyFloor c="ml-[8px] w-4 h-4" /><Tx c="ml-[3px]">复制构件到其他楼层</Tx><Sep c="ml-[8px]" />
            <Tx c="ml-[7px]">查找</Tx><Caret c="ml-[3px]" /><Sep c="ml-[7px]" />
            <ArrowUp className="ml-[7px] w-[11px] h-[12px] text-[#1a6ad0]" strokeWidth={4} /><Tx c="ml-[7px]">上移</Tx>
            <ArrowDown className="ml-[9px] w-[12px] h-[12px] text-[#bbb]" strokeWidth={4} /><Tx g c="ml-[5px]">下移</Tx>
          </div>
          <div className="flex-1 min-h-0 flex">
            {/* component list */}
            <div className="w-[183px] shrink-0 flex flex-col pl-[2px]">
              <div className="h-[31px] shrink-0 flex items-end pb-[2px] bg-[#f2f2f2]">
                <div className="w-[156px] h-[23px] border-2 border-[#999] bg-white flex items-center pl-[2px] text-[12px] text-[#888] tracking-[.5px]">搜索构件...</div>
                <Search className="ml-[4px] mb-[2px] w-[17px] h-[17px] text-[#2a90e8] -scale-x-100" strokeWidth={3} />
              </div>
              <div className="flex-1 min-h-0 flex border-2 border-[#9a9a9a] bg-white">
                <div className="flex-1 min-w-0 overflow-hidden">
                  {AZ.map((n, i) => (
                    <div key={n} className="relative h-[16px] flex items-center">
                      <DotV c={`left-[29px] top-0 ${i === AZ.length - 1 ? 'h-1/2' : 'bottom-0'}`} />
                      <DotH c="left-[29px] w-[12px]" />
                      <span className="ml-[42px] flex"><IGear /></span>
                      {i === AZ.length - 1
                        ? <span className="absolute left-[38px] top-0 w-[56px] h-[16px] flex items-center bg-[#2f6cc2]"><span className="ml-[4px] flex"><IGear /></span><span className="ml-[7px] font-['Liberation_Mono',monospace] text-[11px] tracking-[-0.6px] text-black">{n}</span></span>
                        : <span className="ml-[7px] font-['Liberation_Mono',monospace] text-[11px] tracking-[-0.6px] text-[#111]">{n}</span>}
                    </div>
                  ))}
                </div>
                <div className="relative flex">
                  <ScrollBar c="w-[16px]" />
                  <span className="absolute left-0 top-[229px] w-[16px] h-[314px] bg-[#cdcdcd]" />
                </div>
              </div>
            </div>
            {/* properties */}
            <div className="flex-1 min-w-0 ml-[5px] flex flex-col bg-white">
              <div className="h-[21px] shrink-0 flex items-end bg-[#f8f8f8] border-b border-[#d0d0d0]">
                <div className="ml-[1px] w-[62px] h-[19px] bg-white border border-b-0 border-[#d0d0d0] flex items-center justify-center relative top-px">属性编辑</div>
              </div>
              <div className="flex-1 min-h-0 flex pl-[3px]">
                <div className="w-[183px] shrink-0 pt-[5px] border-l border-[#a8a8a8] pl-px">
                  <div className="flex h-[25px] border-t border-[#bbb]">
                    <div className="w-[21px] shrink-0 bg-gradient-to-b from-white to-[#e6e6e6] border-r border-b border-[#bbb]" />
                    <div className="flex-1 bg-gradient-to-b from-white to-[#e6e6e6] border-b border-[#bbb] flex items-center justify-center text-[12px]">属性名称</div>
                  </div>
                  {GRID.map(r => <GridRow key={r[0]} r={r} />)}
                </div>
                <div className="flex-1" />
                <div className="relative flex">
                  <ScrollBar c="w-[16px] mr-[6px]" />
                  <span className="absolute left-0 top-[17px] w-[16px] h-[340px] bg-[#cdcdcd]" />
                </div>
              </div>
            </div>
          </div>
        </div>
      </div>
      {/* status bar */}
      <div className="h-[21px] shrink-0 flex items-stretch gap-[2px] bg-[#f0f0f0] text-[12px] text-[#111] border-t border-[#e4e4e4]">
        <div className="w-[149px] bg-[#f5f5f5] border-r border-[#d8d8d8]" />
        <div className="w-[77px] bg-[#f5f5f5] border-r border-[#d8d8d8] flex items-center pl-px"><Sim>层高:2.15m</Sim></div>
        <div className="w-[98px] bg-[#f5f5f5] border-r border-[#d8d8d8] flex items-center pl-px"><Sim>底标高:-2.2m</Sim></div>
        <div className="w-[48px] bg-[#f5f5f5] border-r border-[#d8d8d8] flex items-center pl-px"><Sim>0</Sim></div>
        <div className="w-[915px] bg-[#f5f5f5] border-r border-[#d8d8d8] flex items-center pl-px"><Sim>名称在当前层当前构件类型下不允许重名</Sim></div>
        <div className="flex-1 bg-[#f5f5f5] flex items-center pl-px"><Sim>740.1 FPS</Sim></div>
      </div>
      <Taskbar />
      <Dialog />
      <Ime />
      <div className="absolute left-[1112px] -top-[30px] w-[48px] h-[48px] rounded-full bg-[#3fbf4f] border-2 border-[#b9c9bb] shadow-[0_1px_3px_rgba(0,0,0,.4)] flex items-end justify-center pb-[3px] text-white font-bold text-[12px] leading-none">62</div>
    </div>
  );
}
